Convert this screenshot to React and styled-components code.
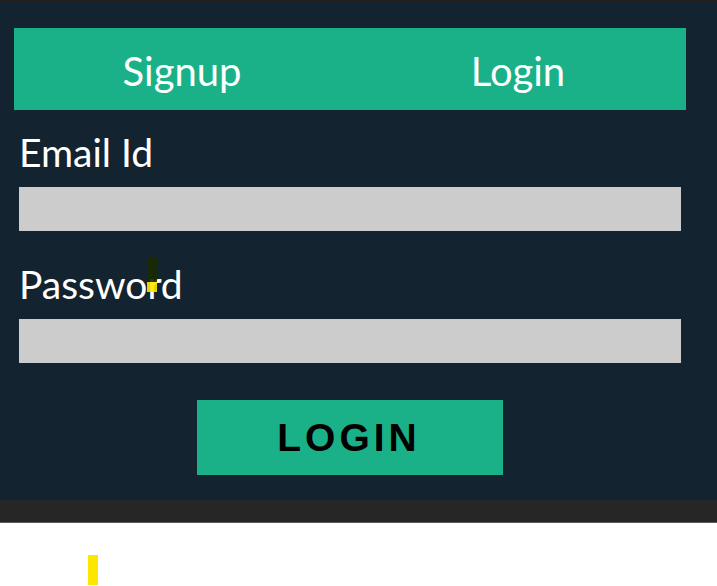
import styled, { createGlobalStyle } from "styled-components";

const GlobalStyle = createGlobalStyle`
  html, body {
    margin: 0;
    padding: 0;
    background: #ffffff;
  }
  * {
    box-sizing: border-box;
  }
`;

const Page = styled.div`
  display: flex;
  flex-direction: column;
  width: 717px;
  min-height: 586px;
  background: #ffffff;
`;

const TopEdge = styled.div`
  height: 2px;
  background: #231f1d;
`;

// Dark form card that holds tabs, fields and the submit button
const Panel = styled.div`
  position: relative;
  display: flex;
  flex-direction: column;
  background: #13232f;
  padding: 26px 31px 25px 14px;
`;

const TabBar = styled.div`
  display: flex;
  height: 82px;
  background: #1ab188;
`;

const Tab = styled.div`
  flex: 1;
  padding-top: 19px;
  text-align: center;
  font-family: Lato, "Open Sans", sans-serif;
  font-size: 40px;
  line-height: 48px;
  color: #ffffff;
`;

const Form = styled.div`
  display: flex;
  flex-direction: column;
  padding: 0 5px;
`;

const Label = styled.label`
  margin-top: ${({ $top }) => $top}px;
  font-family: Lato, "Open Sans", sans-serif;
  font-size: 39px;
  line-height: 48px;
  color: #ffffff;
`;

const Input = styled.div`
  margin-top: 11px;
  height: 44px;
  background: #cccccc;
`;

const ButtonRow = styled.div`
  display: flex;
  justify-content: center;
  margin-top: 37px;
`;

const SubmitButton = styled.button`
  width: 306px;
  height: 75px;
  border: none;
  padding: 0 2px 0 0;
  background: #1ab188;
  font-family: "Liberation Sans", Arial, sans-serif;
  font-weight: 700;
  font-size: 39px;
  letter-spacing: 4px;
  color: #000000;
`;

// Text caret left on screen over the password label
const Caret = styled.span`
  position: absolute;
  left: 147px;
  top: 256px;
  width: 10px;
  height: 34px;
  background: linear-gradient(#1b2a00 0 72%, #ffe600 72% 100%);
  opacity: 0.9;
`;

const Footer = styled.div`
  height: 23px;
  background: #262626;
  border-bottom: 1px solid #5a5a5a;
`;

const Canvas = styled.div`
  flex: 1;
  padding: 32px 0 0 88px;
  background: #ffffff;
`;

const Marker = styled.div`
  width: 10px;
  height: 30px;
  background: #ffe600;
`;

export default function App() {
  return (
    <>
      <GlobalStyle />
      <Page>
        <TopEdge />
        <Panel>
          <TabBar>
            <Tab>Signup</Tab>
            <Tab>Login</Tab>
          </TabBar>
          <Form>
            <Label $top={18}>Email Id</Label>
            <Input />
            <Label $top={29}>Password</Label>
            <Input />
            <ButtonRow>
              <SubmitButton>LOGIN</SubmitButton>
            </ButtonRow>
          </Form>
          <Caret />
        </Panel>
        <Footer />
        <Canvas>
          <Marker />
        </Canvas>
      </Page>
    </>
  );
}
